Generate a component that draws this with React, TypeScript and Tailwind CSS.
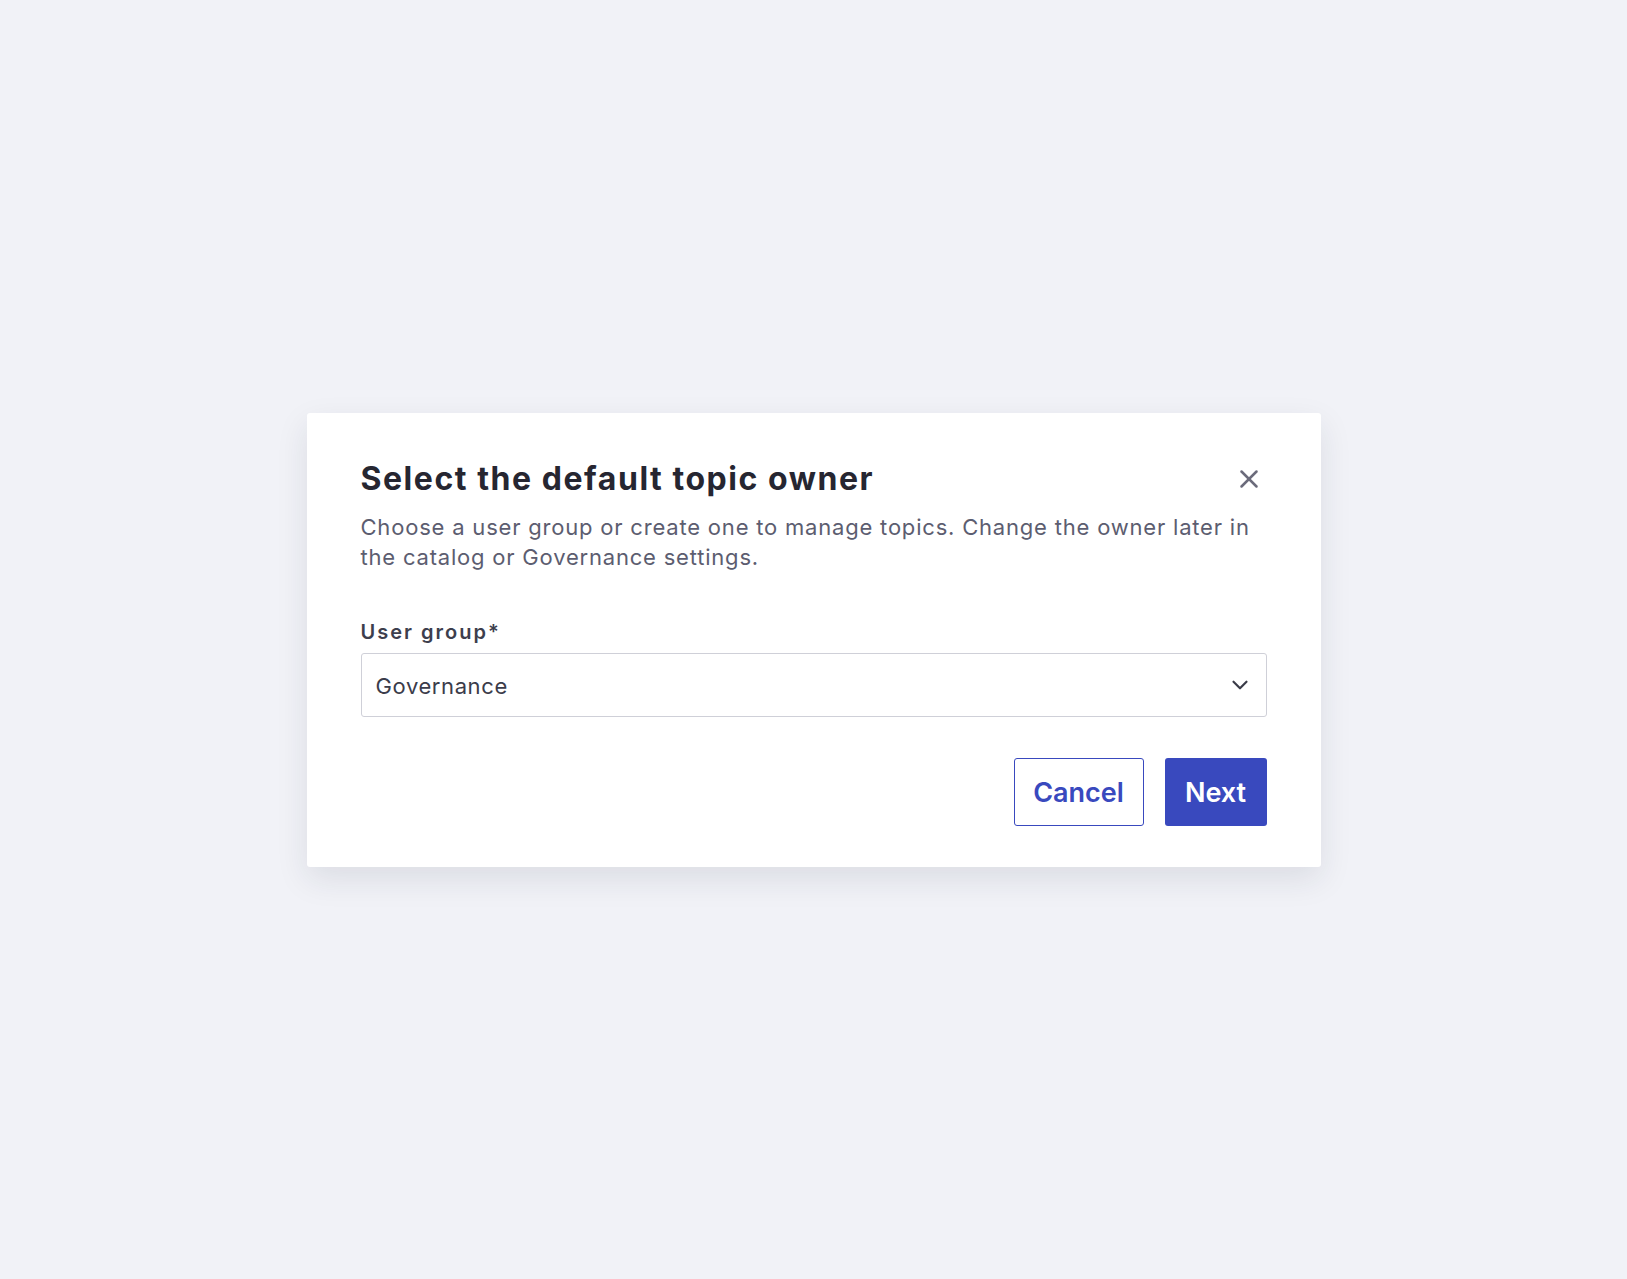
import { X, ChevronDown } from "lucide-react";

export default function App() {
  return (
    <div
      className="flex min-h-screen w-full items-center justify-center bg-[#f1f2f7]"
      style={{ fontFamily: "Inter, 'Liberation Sans', sans-serif" }}
    >
      <div className="w-[1014px] rounded-[3px] bg-white px-[54px] pt-[46px] pb-[41px] shadow-[0_12px_32px_rgba(30,35,60,0.10)]">
        <div className="flex items-center justify-between">
          <h2 className="text-[32px] leading-[40px] font-bold tracking-[1.55px] text-[#262631]">
            Select the default topic owner
          </h2>
          <button className="flex h-9 w-9 items-center justify-center text-[#6b6b7b]">
            <X size={30} strokeWidth={2} />
          </button>
        </div>

        <p className="mt-[13px] text-[22px] leading-[30px] tracking-[0.8px] text-[#5c5d70]">
          Choose a user group or create one to manage topics. Change the owner later in
          <br />
          the catalog or Governance settings.
        </p>

        <label className="mt-[46px] block text-[20px] leading-[28px] font-semibold tracking-[2px] text-[#3d3e4d]">
          User group*
        </label>

        <div className="mt-[7px] flex h-[64px] items-center justify-between rounded-[3px] border border-[#cfd0d8] pl-[14px] pr-[13px]">
          <span className="pt-[3px] text-[22px] tracking-[0.6px] text-[#3b3c4a]">Governance</span>
          <ChevronDown size={26} strokeWidth={2} className="text-[#3a3b48]" />
        </div>

        <div className="mt-[41px] flex justify-end gap-[21px]">
          <button className="h-[68px] w-[130px] rounded-[3px] border-[1.5px] border-[#3949be] bg-white pt-[3px] text-[27px] font-semibold text-[#3949be]">
            Cancel
          </button>
          <button className="h-[68px] w-[102px] rounded-[3px] bg-[#3949be] pt-[3px] text-[27px] font-semibold text-white">
            Next
          </button>
        </div>
      </div>
    </div>
  );
}
